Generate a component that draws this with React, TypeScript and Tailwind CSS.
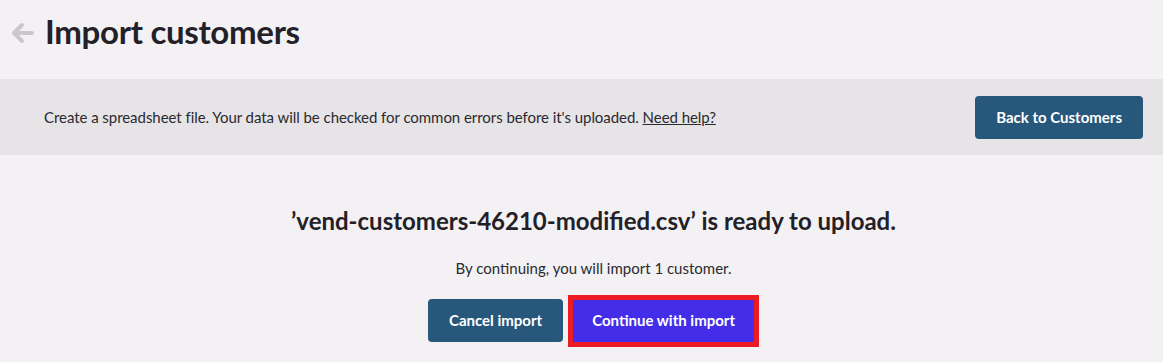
export default function App() {
  return (
    <div className="min-h-screen bg-[#f3f1f4] font-['Lato','Liberation_Sans',sans-serif] text-[#2b2a2e]">
      <header className="flex h-[79px] items-start gap-[10px] pl-[11px] pt-[11px]">
        <svg className="mt-[10px] h-[24px] w-[24px] text-[#c9c7cb]" viewBox="0 0 24 24" fill="none" stroke="currentColor" aria-hidden="true">
          <path strokeWidth={4} strokeLinecap="round" strokeLinejoin="round" d="M21 12H4m7-8-8 8 8 8" />
        </svg>
        <h1 className="text-[33px] font-bold leading-[40px] tracking-[-0.3px] text-[#232127]">Import customers</h1>
      </header>

      <div className="flex h-[76px] items-center justify-between bg-[#e6e4e7] pl-[44px] pr-[20px]">
        <p className="text-[15px] tracking-[-0.05px] text-[#2b2a2e]">
          Create a spreadsheet file. Your data will be checked for common errors before it's uploaded.{" "}
          <a href="#" className="underline">Need help?</a>
        </p>
        <button className="h-[43px] rounded-[4px] bg-[#27577b] px-[21px] text-[15px] font-bold text-white">
          Back to Customers
        </button>
      </div>

      <main className="flex flex-col items-center pl-[24px] pt-[48px]">
        <h2 className="text-[24px] font-bold text-[#232127]">
          ’vend-customers-46210-modified.csv’ is ready to upload.
        </h2>
        <p className="mt-[18px] text-[15px] text-[#2b2a2e]">By continuing, you will import 1 customer.</p>
        <div className="mt-[15px] flex items-center gap-[5px]">
          <button className="h-[43px] rounded-[4px] bg-[#27577b] px-[21px] text-[15px] font-bold text-white">
            Cancel import
          </button>
          <div className="border-[5px] border-[#ed1c24]">
            <button className="h-[42px] bg-[#432de8] px-[19px] text-[15px] font-bold text-white">
              Continue with import
            </button>
          </div>
        </div>
      </main>
    </div>
  );
}
